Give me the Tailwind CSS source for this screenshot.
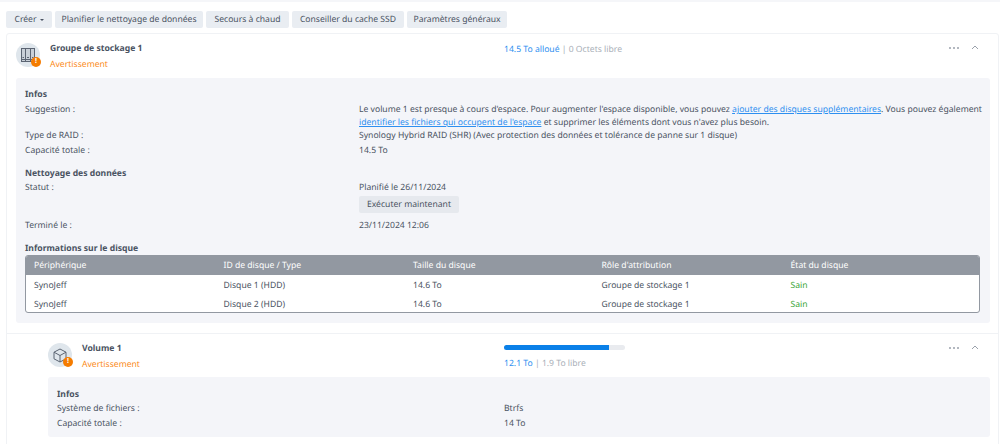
<!DOCTYPE html>
<html lang="fr"><head><meta charset="utf-8"><script src="https://cdn.jsdelivr.net/npm/@tailwindcss/browser@4"></script></head>
<body class="bg-white">
<div class="w-[1000px] h-[444px] overflow-hidden font-['Noto_Sans',sans-serif] text-[8.6px] leading-[15px] [text-rendering:geometricPrecision] text-[#4a5362] border-t-2 border-[#f5f6f9]">
  <div class="flex gap-[3px] pl-[6px] pt-[9px] h-[31px] whitespace-nowrap">
    <div class="h-[17px] w-[46px] rounded-[2px] bg-[#e9edf2] flex items-center justify-center gap-[3px]">Créer <span class="w-0 h-0 border-x-[2px] border-x-transparent border-t-[2px] border-t-[#4a5362]"></span></div>
    <div class="h-[17px] w-[148px] rounded-[2px] bg-[#e9edf2] flex items-center justify-center">Planifier le nettoyage de données</div>
    <div class="h-[17px] w-[83px] rounded-[2px] bg-[#e9edf2] flex items-center justify-center">Secours à chaud</div>
    <div class="h-[17px] w-[112px] rounded-[2px] bg-[#e9edf2] flex items-center justify-center">Conseiller du cache SSD</div>
    <div class="h-[17px] w-[100px] rounded-[2px] bg-[#e9edf2] flex items-center justify-center">Paramètres généraux</div>
  </div>
  <div class="ml-[6px] w-[993px] border border-[#f0f2f5] rounded-[3px] h-[420px]">
    <div class="flex h-[44px] relative">
      <div class="ml-[9px] mt-[9px] w-[24px] h-[24px] rounded-full bg-[#dfe6ec] relative flex items-center justify-center">
        <svg width="14" height="14" viewBox="0 0 14 14" fill="none" stroke="#5b6472"><rect x="0.5" y="0.5" width="13" height="13" fill="#c9d0d8"/><path d="M4.5 1v12M9.5 1v12"/><path d="M0 11.5h14"/><path d="M1.5 9.5h1.5M6 9.5h2M11 9.5h1.5"/></svg>
        <span class="absolute right-[-1px] bottom-0 w-[10px] h-[10px] rounded-full bg-[#f57c00] text-white text-[7px] leading-[10px] font-bold text-center">!</span>
      </div>
      <div class="ml-[10px] w-[454px] pt-[6px]">
        <div class="font-bold h-[15px] mt-[1px]">Groupe de stockage 1</div>
        <div class="text-[#fb8c23] mt-[1px]">Avertissement</div>
      </div>
      <div class="pt-[8px] text-[#a9afb8]"><span class="text-[#2d8ff0]">14.5 To alloué</span> | 0 Octets libre</div>
      <div class="absolute right-[19px] top-[11px] flex items-center gap-[12px]">
        <svg width="10" height="4" fill="#9aa1ab"><circle cx="1" cy="2" r="1"/><circle cx="5" cy="2" r="1"/><circle cx="9" cy="2" r="1"/></svg>
        <svg width="8" height="5" fill="none" stroke="#9aa1ab"><path d="M1 4l3-3 3 3"/></svg>
      </div>
    </div>
    <div class="ml-[9px] w-[974px] h-[245px] rounded-[3px] bg-[#f4f5f9] pl-[9px] pr-[10px] pt-[9px]">
      <div class="font-bold h-[16px]">Infos</div>
      <div class="flex leading-[12.5px]"><div class="w-[334px] shrink-0">Suggestion :</div><div class="w-[621px] shrink-0 whitespace-nowrap">Le volume 1 est presque à cours d'espace. Pour augmenter l'espace disponible, vous pouvez <span class="text-[#2d8ff0] underline">ajouter des disques supplémentaires</span>. Vous pouvez également<br><span class="text-[#2d8ff0] underline">identifier les fichiers qui occupent de l'espace</span> et supprimer les éléments dont vous n'avez plus besoin.</div></div>
      <div class="flex"><div class="w-[334px] shrink-0">Type de RAID :</div><div>Synology Hybrid RAID (SHR) (Avec protection des données et tolérance de panne sur 1 disque)</div></div>
      <div class="flex"><div class="w-[334px] shrink-0">Capacité totale :</div><div>14.5 To</div></div>
      <div class="font-bold mt-[8px]">Nettoyage des données</div>
      <div class="flex mt-[-1px]"><div class="w-[334px] shrink-0">Statut :</div><div>Planifié le 26/11/2024<div class="mt-[1px] h-[17px] w-[100px] rounded-[2px] bg-[#e6e9ee] flex items-center justify-center">Exécuter maintenant</div></div></div>
      <div class="flex mt-[5px]"><div class="w-[334px] shrink-0">Terminé le :</div><div>23/11/2024 12:06</div></div>
      <div class="font-bold mt-[8px]">Informations sur le disque</div>
      <div class="mt-[-1px] rounded-[3px] border border-[#9298a1] bg-white h-[58px] overflow-hidden">
        <div class="grid grid-cols-[189.5px_189.5px_188.5px_189px_1fr] pl-[8px] h-[19px] items-center bg-[#9298a1] text-white"><div>Périphérique</div><div>ID de disque / Type</div><div>Taille du disque</div><div>Rôle d'attribution</div><div>État du disque</div></div>
        <div class="grid grid-cols-[189.5px_189.5px_188.5px_189px_1fr] pl-[8px] h-[19px] items-center mt-[1px]"><div>SynoJeff</div><div>Disque 1 (HDD)</div><div>14.6 To</div><div>Groupe de stockage 1</div><div class="text-[#3aa535]">Sain</div></div>
        <div class="grid grid-cols-[189.5px_189.5px_188.5px_189px_1fr] pl-[8px] h-[19px] items-center"><div>SynoJeff</div><div>Disque 2 (HDD)</div><div>14.6 To</div><div>Groupe de stockage 1</div><div class="text-[#3aa535]">Sain</div></div>
      </div>
    </div>
    <div class="mt-[10px] border-t border-[#f0f2f5] flex relative h-[44px]">
      <div class="ml-[41px] mt-[9px] w-[24px] h-[24px] rounded-full bg-[#dfe6ec] relative flex items-center justify-center">
        <svg width="14" height="15" viewBox="0 0 14 15" fill="none" stroke="#5b6472"><path d="M7 1l6 3.2v6.6L7 14l-6-3.2V4.2zM1 4.2l6 3.3 6-3.3M7 7.5V14"/></svg>
        <span class="absolute right-[-1px] bottom-0 w-[10px] h-[10px] rounded-full bg-[#f57c00] text-white text-[7px] leading-[10px] font-bold text-center">!</span>
      </div>
      <div class="ml-[10px] w-[422px] pt-[7px]">
        <div class="font-bold h-[15px]">Volume 1</div>
        <div class="text-[#fb8c23] mt-[1px]">Avertissement</div>
      </div>
      <div class="pt-[11px]">
        <div class="w-[121px] h-[5px] rounded-full bg-[#e9ebef] overflow-hidden"><div class="w-[105px] h-full bg-[#0a80e8]"></div></div>
        <div class="mt-[6px] text-[#a9afb8]"><span class="text-[#2d8ff0]">12.1 To</span> | 1.9 To libre</div>
      </div>
      <div class="absolute right-[19px] top-[11px] flex items-center gap-[12px]">
        <svg width="10" height="4" fill="#9aa1ab"><circle cx="1" cy="2" r="1"/><circle cx="5" cy="2" r="1"/><circle cx="9" cy="2" r="1"/></svg>
        <svg width="8" height="5" fill="none" stroke="#9aa1ab"><path d="M1 4l3-3 3 3"/></svg>
      </div>
    </div>
    <div class="ml-[41px] w-[942px] h-[60px] rounded-[3px] bg-[#f4f5f9] pl-[9px] pt-[10px]">
      <div class="font-bold h-[14px]">Infos</div>
      <div class="flex"><div class="w-[447px] shrink-0">Système de fichiers :</div><div>Btrfs</div></div>
      <div class="flex"><div class="w-[447px] shrink-0">Capacité totale :</div><div>14 To</div></div>
    </div>
  </div>
</div>
</body></html>
